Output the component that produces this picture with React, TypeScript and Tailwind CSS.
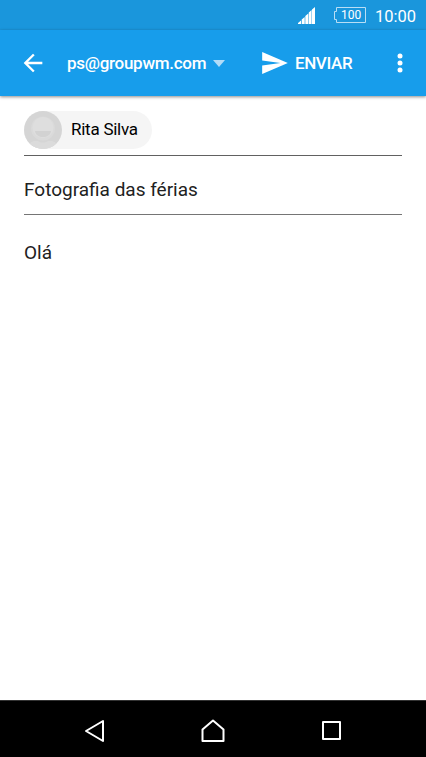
import type {ReactNode} from "react";

function StatusBar() {
  return (
    <div className="flex h-[30px] items-center justify-end bg-[#1a96dc] pr-[10px] pt-px">
      <svg className="mr-[18px] h-[17px] w-[17px]" viewBox="0 0 17 17" fill="#fff">
        <path d="M0 17v-1l3-2.500V17zM3.700 17v-4.500l3-2.600V17zM7.300 17V9l3-2.600V17zM10.800 17V5.500L13.600 3V17zM14 17V2.400L17 0v17z" />
      </svg>
      <div className="relative mr-[9px] h-[17px] w-[33px]">
        <svg className="absolute inset-0" width="33" height="17" viewBox="0 0 33 17" fill="none" stroke="#b9def5">
          <path d="M3.500 .5h29v15h-29v-3h-2v-8h2z" />
        </svg>
        <span className="absolute left-[8px] top-0 text-[12px] leading-[16px]">100</span>
      </div>
      <span className="w-[41px] whitespace-nowrap pt-px text-[16.5px] leading-[29px]">10:00</span>
    </div>
  );
}

function Toolbar() {
  return (
    <header className="flex h-[66px] items-center bg-[#179deb] font-medium shadow-[0_1px_3px_rgba(0,0,0,0.45)]">
      <svg className="ml-[19px] h-7 w-7" viewBox="0 0 24 24" fill="#fff">
        <path d="M20 11H7.830l5.590-5.590L12 4l-8 8 8 8 1.410-1.410L7.830 13H20v-2z" />
      </svg>
      <span className="ml-5 w-[140px] whitespace-nowrap pt-px text-[17px] tracking-[-0.28px]">ps@groupwm.com</span>
      <svg className="ml-[6px] h-[7px] w-3" viewBox="0 0 12 7" fill="#b2dcf8">
        <path d="M0 0h12L6 7z" />
      </svg>
      <svg className="ml-[37px] h-[22px] w-[26px]" viewBox="2 3 21 18" fill="#fff">
        <path d="M2.010 21L23 12 2.010 3 2 10l15 2-15 2z" />
      </svg>
      <span className="ml-[7px] w-[58px] whitespace-nowrap pt-px text-[17px] tracking-[-0.4px]">ENVIAR</span>
      <svg className="ml-[44px] h-5 w-[6px]" viewBox="0 0 6 20" fill="#fff">
        <circle cx="3" cy="3" r="2.500" />
        <circle cx="3" cy="10" r="2.500" />
        <circle cx="3" cy="17" r="2.500" />
      </svg>
    </header>
  );
}

function Avatar() {
  return (
    <svg className="h-[38px] w-[38px]" viewBox="0 0 38 38">
      <defs>
        <clipPath id="avatar">
          <circle cx="19" cy="19" r="19" />
        </clipPath>
      </defs>
      <circle cx="19" cy="19" r="19" fill="#d5d5d5" />
      <g clipPath="url(#avatar)">
        <path d="M4 38c0-4 2-7 6-8h4c3 2 7 2 10 0h4c4 1 6 4 6 8z" fill="#dbdbdb" />
        <circle cx="19" cy="17.500" r="12" fill="#dadada" />
        <circle cx="19" cy="16.500" r="10.500" fill="#dedede" />
        <path d="M11 20h16c-1 8-15 8-16 0z" fill="#d2d2d2" />
      </g>
    </svg>
  );
}

function Field({children}: {children: ReactNode}) {
  return <div className="flex h-[59px] items-center border-b border-[#757575]">{children}</div>;
}

function NavBar() {
  return (
    <nav className="flex h-[57px] items-center border-t border-[#333] bg-black pt-[3px]">
      <svg className="ml-[84px] h-6 w-[22px]" viewBox="0 0 22 24" fill="none" stroke="#fff" strokeWidth="2" strokeLinejoin="round">
        <path d="M2 12l17-10v20z" />
      </svg>
      <svg className="ml-[95px] h-6 w-6" viewBox="0 0 24 24" fill="none" stroke="#fff" strokeWidth="2" strokeLinejoin="round">
        <path d="M12 1.500L22.500 10.500v11.500h-21V10.500z" />
      </svg>
      <div className="ml-[97px] h-[19px] w-[19px] rounded-[1px] border-2 border-white" />
    </nav>
  );
}

export default function App() {
  return (
    <div className="flex h-[757px] w-[426px] flex-col overflow-hidden bg-white font-['Roboto',sans-serif] text-white">
      <StatusBar />
      <Toolbar />
      <main className="flex-1 px-6 text-[19px] text-[#212121]">
        <div className="flex h-[60px] items-end border-b border-[#616161] pb-[6px]">
          <div className="flex h-[38px] w-[128px] items-center rounded-full bg-[#f5f5f5]">
            <Avatar />
            <span className="ml-[9px] whitespace-nowrap text-[17px] tracking-[-0.25px] text-black">Rita Silva</span>
          </div>
        </div>
        <Field>
          <span className="mt-[11px]">Fotografia das férias</span>
        </Field>
        <p className="mt-6 leading-7">Olá</p>
      </main>
      <NavBar />
    </div>
  );
}
